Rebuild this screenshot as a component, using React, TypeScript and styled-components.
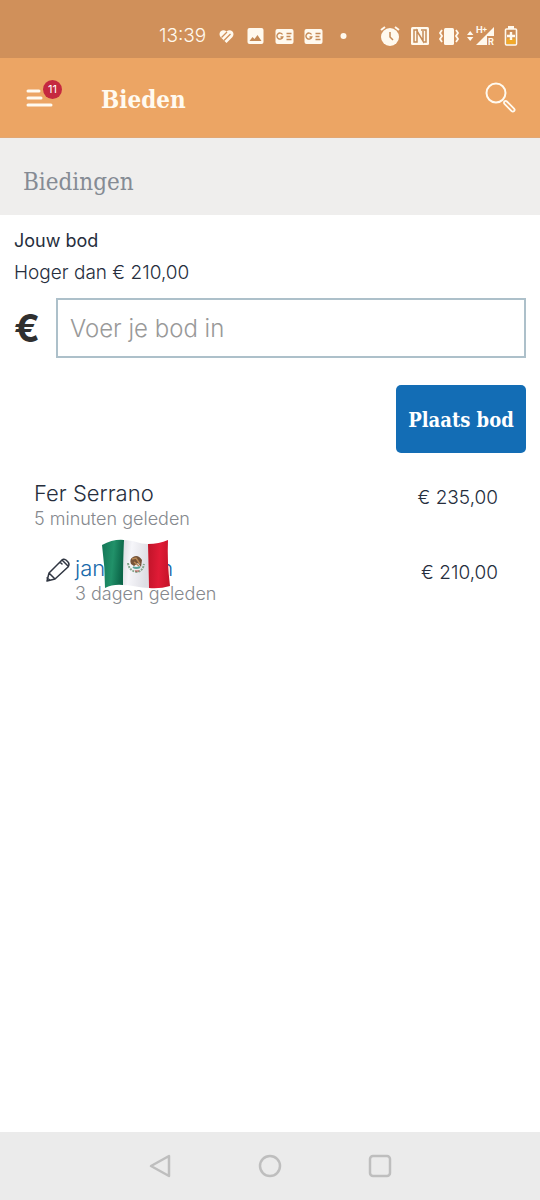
import React from 'react';
import styled, { createGlobalStyle } from 'styled-components';

const sans = `Inter, "Liberation Sans", sans-serif`;
const slab = `"DejaVu Serif Condensed", "DejaVu Serif", "Liberation Serif", serif`;

const GlobalStyle = createGlobalStyle`
  *, *::before, *::after { box-sizing: border-box; }
  body { margin: 0; background: #fff; color: #262e3d; font-family: ${sans}; font-weight: 300; }
  button, input { font: inherit; }
  svg { display: block; flex: none; overflow: visible; }
`;

const Screen = styled.div`
  min-height: 100vh;
  display: flex;
  flex-direction: column;
`;

const StatusBar = styled.div`
  height: 58px;
  padding: 14px 14px 0 0;
  display: flex;
  justify-content: flex-end;
  gap: 19px;
  background: #d0905a;
  color: #fff9ee;
`;

const StatusGroup = styled.div<{ $slot: number }>`
  display: flex;
  align-items: center;
  height: 44px;
  & > svg { width: ${p => p.$slot}px; height: 24px; }
`;

const Clock = styled.time`
  width: 53px;
  font-size: 19px;
  line-height: 44px;
`;

const Header = styled.header`
  height: 80px;
  padding: 0 22px 0 24px;
  display: flex;
  align-items: center;
  background: #eca564;
  border-bottom: 1px solid #e2a774;
  color: #fffaf0;
`;

const IconButton = styled.button`
  position: relative;
  padding: 0;
  border: 0;
  background: none;
  color: inherit;
  cursor: pointer;
`;

const MenuBadge = styled.span`
  position: absolute;
  top: -6px;
  left: 19px;
  width: 19px;
  height: 19px;
  border-radius: 50%;
  background: #c5283f;
  color: #fff;
  font-size: 11px;
  font-weight: 400;
  line-height: 19px;
  text-align: center;
`;

const Title = styled.h1`
  flex: 1;
  margin: 0 0 0 45px;
  padding-top: 4px;
  font-family: ${slab};
  font-size: 24px;
  line-height: 32px;
  font-weight: 700;
`;

const SectionBar = styled.div`
  height: 77px;
  padding: 11px 23px 0;
  display: flex;
  align-items: center;
  background: #efeeed;
`;

const SectionTitle = styled.h2`
  margin: 0;
  font-family: ${slab};
  font-size: 24px;
  line-height: 32px;
  font-weight: 400;
  color: #858b94;
`;

const Content = styled.main`
  flex: 1;
  padding: 10px 14px 0;
`;

const BidForm = styled.form`
  display: flex;
  flex-direction: column;
`;

const BidLabel = styled.label`
  font-size: 18px;
  line-height: 32px;
  font-weight: 400;
`;

const Hint = styled.p`
  margin: 0;
  font-size: 19px;
  line-height: 31px;
`;

const AmountRow = styled.div`
  margin-top: 10px;
  display: flex;
  align-items: center;
`;

const Currency = styled.span`
  width: 42px;
  font-size: 38px;
  line-height: 40px;
  font-weight: 700;
  color: #303030;
`;

const AmountInput = styled.input`
  flex: 1;
  min-width: 0;
  height: 60px;
  padding: 0 12px;
  border: 2px solid #adc0ca;
  border-radius: 0;
  background: #fff;
  font-size: 24px;
  color: #262e3d;
  &::placeholder { color: #999; opacity: 1; }
`;

const SubmitButton = styled.button`
  align-self: flex-end;
  width: 130px;
  height: 68px;
  margin-top: 27px;
  padding: 2px 0 0;
  border: 0;
  border-radius: 5px;
  background: #136db5;
  color: #fff;
  font-family: ${slab};
  font-size: 20px;
  font-weight: 700;
  white-space: nowrap;
  cursor: pointer;
`;

const BidList = styled.ul`
  margin: 26px 0 0;
  padding: 0 28px 0 20px;
  list-style: none;
`;

const BidRow = styled.li<{ $own?: boolean }>`
  height: 75px;
  padding-left: ${p => (p.$own ? 12 : 0)}px;
  display: flex;
  align-items: flex-start;
  justify-content: space-between;
`;

const Bidder = styled.div`
  flex: 1;
  display: flex;
  gap: 5px;
  & > svg { margin-top: 4px; }
`;

const Name = styled.div`
  position: relative;
  width: max-content;
  font-size: 22px;
  line-height: 28px;
`;

const NameLink = styled.a`
  display: flex;
  gap: 55px;
  color: #1769aa;
  text-decoration: none;
`;

const Flag = styled.svg`
  position: absolute;
  top: -15px;
  left: 26px;
`;

const Age = styled.div`
  font-size: 18px;
  line-height: 24px;
  color: #85888d;
`;

const Price = styled.div`
  padding-top: 5px;
  font-size: 19px;
  line-height: 28px;
`;

const NavBar = styled.nav`
  height: 68px;
  display: flex;
  align-items: center;
  justify-content: center;
  gap: 82px;
  background: #ebebeb;
  color: #bebebe;
`;

const NewsIcon = () => (
  <svg viewBox="-14 -12 28 24" aria-hidden="true">
    <rect x="-9" y="-7" width="18" height="15" rx="2" fill="currentColor" />
    <path d="M-2-1.500A3 3 0 1 0-1.700 1H-4M2-2.500h5M2 .500h4M2 3.500h5" fill="none" stroke="#c58a56" strokeWidth="1.4" />
  </svg>
);

const MexicanFlag = () => (
  <Flag width="70" height="50" viewBox="0 0 70 50" aria-label="Vlag van Mexico" role="img">
    <defs>
      <linearGradient id="green" x2="1" y2=".2">
        <stop stopColor="#147657" /><stop offset=".55" stopColor="#219169" /><stop offset="1" stopColor="#0b6548" />
      </linearGradient>
      <linearGradient id="white" x2="1" y2=".2">
        <stop stopColor="#d8d9df" /><stop offset=".35" stopColor="#f6f6fa" /><stop offset="1" stopColor="#dedee4" />
      </linearGradient>
      <linearGradient id="red" x2="1" y2=".1">
        <stop stopColor="#bf1429" /><stop offset=".55" stopColor="#e01b36" /><stop offset="1" stopColor="#c8142a" />
      </linearGradient>
    </defs>
    <path d="M1 6Q12 0 23 1L22 46Q12 45 4 49Q4 28 1 6Z" fill="url(#green)" />
    <path d="M23 1C33 1 38 5 47 5L48 49C38 49 32 46 22 46Z" fill="url(#white)" />
    <path d="M47 5Q58 5 67 1Q66 23 69 47Q59 50 48 49Z" fill="url(#red)" />
    <path d="M27 24Q28 32 36 33Q42 32 43 25" fill="none" stroke="#83a58b" strokeWidth="2" strokeDasharray="2 1" />
    <path d="M30 25Q28 20 32 18Q37 15 41 21L40 28L37 24L33 27Z" fill="#755338" />
    <path d="M31 20L35 19L39 25M33 23L38 27" fill="none" stroke="#b98855" strokeWidth="1.4" />
    <path d="M32 28Q35 30 39 28" fill="none" stroke="#59a39b" strokeWidth="2" />
    <path d="M34 32h4" stroke="#b3473d" strokeWidth="1" />
  </Flag>
);

export default function App() {
  return (
    <Screen>
      <GlobalStyle />
      <StatusBar>
        <StatusGroup $slot={29}>
          <Clock>13:39</Clock>
          <svg viewBox="-14 -12 28 24" aria-hidden="true">
            <path d="M0 7L-6 1Q-8-2-6-4.5Q-3-7 0-4.5Q3-7 6-4.5Q8-2 6 1Z" fill="currentColor" />
            <path d="M-5 1.5L.5-4M-2.5 4.5L4-2" fill="none" stroke="#d0905a" strokeWidth="1.3" />
          </svg>
          <svg viewBox="-14 -12 28 24" aria-hidden="true">
            <rect x="-8" y="-8" width="16" height="16" rx="2" fill="currentColor" />
            <path d="M-6 5l3-4 2 2 3-4 4 6Z" fill="#c58a56" />
          </svg>
          <NewsIcon />
          <NewsIcon />
          <svg viewBox="-14 -12 28 24" aria-hidden="true"><circle cx="1" r="3" fill="currentColor" /></svg>
        </StatusGroup>
        <StatusGroup $slot={30}>
          <svg viewBox="-15 -12 30 24" aria-hidden="true">
            <circle cx="-1" cy="1" r="9" fill="currentColor" />
            <path d="M-10-6l4-3M8-6L4-9" stroke="currentColor" strokeWidth="2" />
            <path d="M-1-4v5l3 3" fill="none" stroke="#c58a56" strokeWidth="1.5" />
          </svg>
          <svg viewBox="-15 -12 30 24" aria-hidden="true">
            <rect x="-10" y="-9" width="18" height="18" rx="1.5" fill="currentColor" />
            <path d="M-3-6h-4V6h3V-5L2 5V-5M0-6h5V6H2" fill="none" stroke="#c58a56" strokeWidth="1.5" />
          </svg>
          <svg viewBox="-15 -12 30 24" aria-hidden="true">
            <rect x="-7" y="-8" width="10" height="17" rx="1.5" fill="currentColor" />
            <path d="M-9-6l-2 3 2 3-2 3 2 3M5-6l2 3-2 3 2 3-2 3" fill="none" stroke="currentColor" strokeWidth="1.8" />
          </svg>
          <svg viewBox="-15 -12 30 24" aria-hidden="true">
            <path d="M-14-1l3.2-4 3.2 4ZM-14 1h6.4l-3.2 4ZM-5 9L13-9V0H6v9Z" fill="currentColor" />
            <text x="-5" y="-3" fill="currentColor" fontSize="9" fontWeight="700">H</text>
            <text x="1" y="-4" fill="currentColor" fontSize="8" fontWeight="700">+</text>
            <text x="7" y="9" fill="currentColor" fontSize="9" fontWeight="700">R</text>
          </svg>
          <svg viewBox="-15 -12 30 24" aria-hidden="true">
            <path d="M-3-10h6v3h-6Z" fill="currentColor" />
            <rect x="-5.5" y="-7" width="11" height="16" rx="1" fill="#cc8d57" stroke="currentColor" strokeWidth="1.6" />
            <path d="M-4.500 2.500h9v5.500h-9Z" fill="#f1a929" />
            <path d="M0-4v8M-4 0h8" stroke="currentColor" strokeWidth="2.4" />
          </svg>
        </StatusGroup>
      </StatusBar>

      <Header>
        <IconButton type="button" aria-label="Menu, 11 meldingen">
          <svg width="32" height="24" viewBox="0 0 32 24" fill="none" stroke="currentColor" strokeWidth="3" strokeLinecap="round">
            <path d="M4 5h11M4 12h13M4 19h23" />
          </svg>
          <MenuBadge>11</MenuBadge>
        </IconButton>
        <Title>Bieden</Title>
        <IconButton type="button" aria-label="Zoeken">
          <svg width="34" height="34" viewBox="0 0 34 34" fill="none" stroke="currentColor" strokeWidth="2">
            <circle cx="12" cy="12" r="9.5" />
            <rect x="-1.7" y="0" width="3.4" height="13.5" rx="1.7" transform="translate(20.5 20.5) rotate(-45)" strokeWidth="1.8" />
          </svg>
        </IconButton>
      </Header>

      <SectionBar><SectionTitle>Biedingen</SectionTitle></SectionBar>

      <Content>
        <BidForm onSubmit={e => e.preventDefault()}>
          <BidLabel htmlFor="bid">Jouw bod</BidLabel>
          <Hint id="bid-hint">Hoger dan € 210,00</Hint>
          <AmountRow>
            <Currency aria-hidden="true">€</Currency>
            <AmountInput id="bid" inputMode="decimal" placeholder="Voer je bod in" aria-describedby="bid-hint" />
          </AmountRow>
          <SubmitButton type="submit">Plaats bod</SubmitButton>
        </BidForm>

        <BidList>
          <BidRow>
            <Bidder>
              <div>
                <Name>Fer Serrano</Name>
                <Age>5 minuten geleden</Age>
              </div>
            </Bidder>
            <Price>€ 235,00</Price>
          </BidRow>
          <BidRow $own>
            <Bidder>
              <svg width="24" height="24" viewBox="0 0 24 24" fill="none" stroke="#303642" strokeWidth="1.5" strokeLinejoin="round" strokeLinecap="round" aria-hidden="true">
                <path d="M1 23L3 15 15 3Q17 0 20 2L22 4Q24 6 22 9L9 21ZM3 15l6 6M14 4l2 2M16 2l6 6M1 20l3 2" />
              </svg>
              <div>
                <Name>
                  <NameLink href="#bidder"><span>jan</span><span>n</span></NameLink>
                  <MexicanFlag />
                </Name>
                <Age>3 dagen geleden</Age>
              </div>
            </Bidder>
            <Price>€ 210,00</Price>
          </BidRow>
        </BidList>
      </Content>

      <NavBar aria-label="Systeemnavigatie">
        <IconButton type="button" aria-label="Terug">
          <svg width="28" height="28" viewBox="0 0 28 28" fill="none" stroke="currentColor" strokeWidth="2.5" strokeLinejoin="round"><path d="M23 4v20L5 14Z" /></svg>
        </IconButton>
        <IconButton type="button" aria-label="Startscherm">
          <svg width="28" height="28" viewBox="0 0 28 28" fill="none" stroke="currentColor" strokeWidth="2.5"><circle cx="14" cy="14" r="10" /></svg>
        </IconButton>
        <IconButton type="button" aria-label="Recente apps">
          <svg width="28" height="28" viewBox="0 0 28 28" fill="none" stroke="currentColor" strokeWidth="2.5"><rect x="4" y="4" width="20" height="20" rx="3" /></svg>
        </IconButton>
      </NavBar>
    </Screen>
  );
}
